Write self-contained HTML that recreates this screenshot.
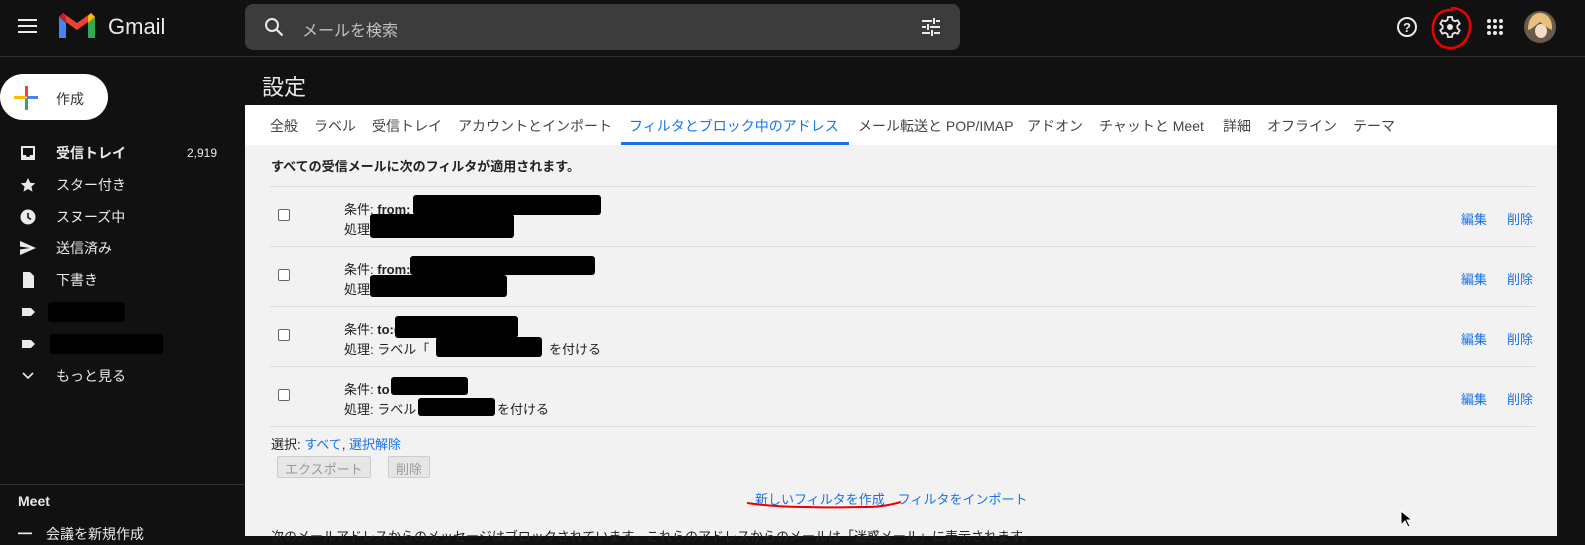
<!DOCTYPE html>
<html><head><meta charset="utf-8"><style>
*{box-sizing:border-box;margin:0;padding:0}
body{width:1585px;height:536px;overflow:hidden;background:#111;font-family:"Liberation Sans","Noto Sans CJK JP",sans-serif;color:#e8eaed;position:relative}
.abs{position:absolute}
.top{left:0;top:0;width:1585px;height:57px;border-bottom:1px solid #333}
.search{left:245px;top:4px;width:715px;height:46px;background:#3c3c3c;border-radius:8px}
.nav{font-size:14px;color:#e8eaed}
.navitem{position:absolute;left:0;width:245px;height:32px;display:flex;align-items:center}
.navitem .ic{position:absolute;left:20px;top:8px;width:16px;height:16px}
.navitem span.t{position:absolute;left:56px}
.panel{left:245px;top:105px;width:1312px;height:431px;background:#f2f2f2}
.tabs{left:245px;top:105px;width:1312px;height:40px;background:#fff;font-size:14px;color:#444;}
.tabs span{position:absolute;top:11px;white-space:nowrap}
.row{position:absolute;left:270px;width:1265px;height:60px;border-bottom:1px solid #ddd;font-size:13px;color:#222}
.row .cb{position:absolute;left:8px;top:22px;width:12px;height:12px;border:1px solid #666;border-radius:2px;background:#fff}
.row .l1{position:absolute;left:74px;top:12px}
.row .l2{position:absolute;left:74px;top:32px}
.row .ed{position:absolute;left:1191px;top:22px;color:#1a73e8}
.row .de{position:absolute;left:1237px;top:22px;color:#1a73e8}
.blk{position:absolute;background:#000;border-radius:3px}
.btn{position:absolute;height:22px;border:1px solid #ccc;background:#e6e6e6;color:#999;font-size:13px;border-radius:2px;padding:2px 7px}
a{color:#1a73e8;text-decoration:none}
</style></head><body>
<div class="abs top"></div>
<svg class="abs" style="left:18px;top:18px" width="20" height="16"><rect y="1" width="19" height="2" fill="#e8eaed"/><rect y="7" width="19" height="2" fill="#e8eaed"/><rect y="13" width="19" height="2" fill="#e8eaed"/></svg>
<svg class="abs" style="left:59px;top:13px" width="36" height="27" viewBox="0 0 36 27"><path d="M0 4v21h7V10z" fill="#4285f4"/><path d="M29 10v15h7V4z" fill="#34a853"/><path d="M0 4l18 13 18-13-4-4-14 10L4 0z" fill="#ea4335"/><path d="M29 3v7l7-6-4-4z" fill="#fbbc04"/><path d="M0 4l7 6V3L4 0z" fill="#c5221f"/></svg>
<div class="abs" style="left:108px;top:14px;font-size:22px;color:#e8eaed">Gmail</div>
<div class="abs search"></div>
<svg class="abs" style="left:264px;top:17px" width="20" height="20"><circle cx="8" cy="8" r="6" stroke="#e8eaed" stroke-width="2" fill="none"/><path d="M12.5 12.5l6 6" stroke="#e8eaed" stroke-width="2.2"/></svg>
<div class="abs" style="left:302px;top:17px;font-size:16px;color:#bdc1c6">メールを検索</div>
<svg class="abs" style="left:921px;top:17px" width="20" height="20" stroke="#e8eaed" stroke-width="2"><path d="M1 4h10M15 4h4M13 1v6M1 10h4M9 10h10M7 7v6M1 16h8M13 16h6M11 13v6"/></svg>
<svg class="abs" style="left:1396px;top:16px" width="22" height="22"><circle cx="11" cy="11" r="9" stroke="#e8eaed" stroke-width="2" fill="none"/><text x="11" y="16" font-size="13" font-weight="bold" fill="#e8eaed" text-anchor="middle" font-family="Liberation Sans">?</text></svg>
<svg class="abs" style="left:1438px;top:15px" width="24" height="24" viewBox="0 0 24 24"><path d="M10 2h4l.6 3 2.2 1.3 2.9-1 2 3.4-2.3 2v2.6l2.3 2-2 3.4-2.9-1L14.6 19 14 22h-4l-.6-3-2.2-1.3-2.9 1-2-3.4 2.3-2v-2.6l-2.3-2 2-3.4 2.9 1L9.4 5z" fill="none" stroke="#e8eaed" stroke-width="1.8"/><circle cx="12" cy="12" r="3" fill="#e8eaed"/></svg>
<svg class="abs" style="left:1428px;top:4px" width="46" height="48"><path d="M23 4c12 0 20 8 19 20-1 12-10 21-21 20C10 43 4 34 5 22 6 12 13 5 25 6" fill="none" stroke="#e00" stroke-width="2.5"/></svg>
<svg class="abs" style="left:1486px;top:18px" width="18" height="18" fill="#e8eaed"><circle cx="3" cy="3" r="2"/><circle cx="9" cy="3" r="2"/><circle cx="15" cy="3" r="2"/><circle cx="3" cy="9" r="2"/><circle cx="9" cy="9" r="2"/><circle cx="15" cy="9" r="2"/><circle cx="3" cy="15" r="2"/><circle cx="9" cy="15" r="2"/><circle cx="15" cy="15" r="2"/></svg>
<svg class="abs" style="left:1523px;top:10px" width="34" height="34"><circle cx="17" cy="17" r="16" fill="#6a5a4a"/><path d="M5 20c0-12 6-17 12-17s13 5 12 17l-4-2-8-6-9 7z" fill="#e8c07a"/><ellipse cx="18" cy="21" rx="6" ry="7" fill="#f4dcc8"/></svg>

<div class="abs" style="left:0;top:74px;width:108px;height:46px;background:#fff;border-radius:24px"></div>
<svg class="abs" style="left:14px;top:86px" width="24" height="24"><rect x="11" y="0" width="3" height="11" fill="#ea4335"/><rect x="13" y="10" width="11" height="3" fill="#4285f4"/><rect x="11" y="12" width="3" height="12" fill="#34a853"/><rect x="0" y="10" width="12" height="3" fill="#fbbc04"/></svg>
<div class="abs" style="left:56px;top:89px;font-size:14px;color:#333">作成</div>

<div class="abs nav" style="left:0;top:0">
<div class="navitem" style="top:137px"><svg class="ic" viewBox="0 0 16 16"><path d="M1 1h14v14H1z M3 3v7h3a2 2 0 004 0h3V3z" fill="#e8eaed" fill-rule="evenodd"/></svg><span class="t" style="font-weight:bold">受信トレイ</span><span style="position:absolute;left:187px;font-size:12px">2,919</span></div>
<div class="navitem" style="top:169px"><svg class="ic" viewBox="0 0 16 16"><path d="M8 1l2.2 4.7 5 .5-3.8 3.4 1.1 5L8 12l-4.5 2.6 1.1-5L.8 6.2l5-.5z" fill="#e8eaed"/></svg><span class="t">スター付き</span></div>
<div class="navitem" style="top:201px"><svg class="ic" viewBox="0 0 16 16"><circle cx="8" cy="8" r="7.5" fill="#e8eaed"/><path d="M8 4v4.5l3 2" stroke="#111" stroke-width="1.6" fill="none"/></svg><span class="t">スヌーズ中</span></div>
<div class="navitem" style="top:232px"><svg class="ic" viewBox="0 0 16 16"><path d="M0 1l16 7-16 7V9.5L10 8 0 6.5z" fill="#e8eaed"/></svg><span class="t">送信済み</span></div>
<div class="navitem" style="top:264px"><svg class="ic" viewBox="0 0 16 16"><path d="M3 0h7l4 4v12H3z" fill="#e8eaed"/></svg><span class="t">下書き</span></div>
<div class="navitem" style="top:296px"><svg class="ic" viewBox="0 0 16 16"><path d="M2 4h9l4 4-4 4H2z" fill="#e8eaed"/></svg></div>
<div class="navitem" style="top:328px"><svg class="ic" viewBox="0 0 16 16"><path d="M2 4h9l4 4-4 4H2z" fill="#e8eaed"/></svg></div>
<div class="navitem" style="top:360px"><svg class="ic" viewBox="0 0 16 16"><path d="M3 5l5 5 5-5" stroke="#e8eaed" stroke-width="1.6" fill="none"/></svg><span class="t">もっと見る</span></div>
</div>
<div class="blk" style="left:48px;top:302px;width:77px;height:20px"></div>
<div class="blk" style="left:50px;top:334px;width:113px;height:20px"></div>
<div class="abs" style="left:0;top:484px;width:245px;height:1px;background:#333"></div>
<div class="abs" style="left:18px;top:493px;font-size:14px;font-weight:bold">Meet</div>
<div class="abs" style="left:18px;top:524px;font-size:14px">━　会議を新規作成</div>

<div class="abs" style="left:262px;top:70px;font-size:22px;color:#e8eaed">設定</div>
<div class="abs panel"></div>
<div class="abs tabs">
<span style="left:25px">全般</span><span style="left:69px">ラベル</span><span style="left:127px">受信トレイ</span><span style="left:213px">アカウントとインポート</span>
<span style="left:384px;color:#1a73e8">フィルタとブロック中のアドレス</span>
<span style="left:613px">メール転送と POP/IMAP</span><span style="left:782px">アドオン</span><span style="left:854px">チャットと Meet</span><span style="left:978px">詳細</span><span style="left:1022px">オフライン</span><span style="left:1108px">テーマ</span>
<div style="position:absolute;left:376px;top:37px;width:228px;height:3px;background:#1a73e8"></div>
</div>
<div class="abs" style="left:271px;top:156px;font-size:13px;font-weight:bold;color:#222">すべての受信メールに次のフィルタが適用されます。</div>
<div class="abs" style="left:270px;top:186px;width:1265px;height:1px;background:#ddd"></div>
<div class="row" style="top:187px"><div class="cb"></div><div class="l1">条件: <b>from:</b></div><div class="l2">処理</div><span class="ed">編集</span><span class="de">削除</span>
<div class="blk" style="left:143px;top:8px;width:188px;height:20px"></div><div class="blk" style="left:100px;top:27px;width:144px;height:24px"></div></div>
<div class="row" style="top:247px"><div class="cb"></div><div class="l1">条件: <b>from:</b></div><div class="l2">処理</div><span class="ed">編集</span><span class="de">削除</span>
<div class="blk" style="left:140px;top:9px;width:185px;height:19px"></div><div class="blk" style="left:100px;top:28px;width:137px;height:22px"></div></div>
<div class="row" style="top:307px"><div class="cb"></div><div class="l1">条件: <b>to:(</b></div><div class="l2">処理: ラベル「</div><div style="position:absolute;left:266px;top:32px">」を付ける</div><span class="ed">編集</span><span class="de">削除</span>
<div class="blk" style="left:125px;top:9px;width:123px;height:22px"></div><div class="blk" style="left:166px;top:30px;width:106px;height:20px"></div></div>
<div class="row" style="top:367px"><div class="cb"></div><div class="l1">条件: <b>to</b></div><div class="l2">処理: ラベル</div><div style="position:absolute;left:227px;top:32px">を付ける</div><span class="ed">編集</span><span class="de">削除</span>
<div class="blk" style="left:121px;top:10px;width:77px;height:18px"></div><div class="blk" style="left:148px;top:31px;width:77px;height:18px"></div></div>
<div class="abs" style="left:271px;top:434px;font-size:13px;color:#222">選択: <a>すべて</a>, <a>選択解除</a></div>
<div class="btn" style="left:277px;top:456px">エクスポート</div>
<div class="btn" style="left:388px;top:456px">削除</div>
<div class="abs" style="left:755px;top:489px;font-size:13px"><a>新しいフィルタを作成</a>　<a>フィルタをインポート</a></div>
<svg class="abs" style="left:745px;top:500px" width="160" height="12"><path d="M2 3c20 3 40 4 60 4 20 1 40 0 60 0 10 0 20-1 34-5" stroke="#e00" stroke-width="2" fill="none"/></svg>
<div class="abs" style="left:271px;top:526px;font-size:13px;color:#222;white-space:nowrap">次のメールアドレスからのメッセージはブロックされています。これらのアドレスからのメールは「迷惑メール」に表示されます。</div>
<svg class="abs" style="left:1400px;top:510px" width="12" height="18"><path d="M1 1v14l4-4 3 6 2-1-3-6h5z" fill="#000" stroke="#fff" stroke-width="1"/></svg>
</body></html>
